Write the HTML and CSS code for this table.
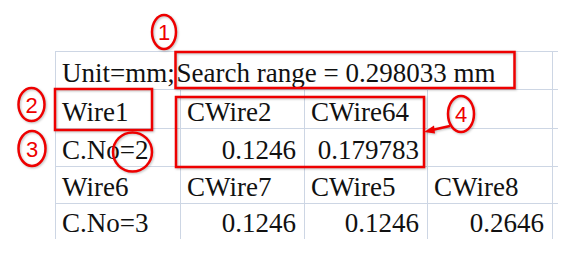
FILE: index.html
```html
<!DOCTYPE html>
<html>
<head>
<meta charset="utf-8">
<link rel="stylesheet" href="styles.css">
</head>
<body>
<div class="page">
  <div class="sheet">
    <div class="cell span4"><span>Unit=mm;</span><span class="tight"> Search range = 0.298033 mm</span></div>
    <div class="cell edge"></div>

    <div class="cell">Wire1</div>
    <div class="cell">CWire2</div>
    <div class="cell">CWire64</div>
    <div class="cell"></div>
    <div class="cell edge"></div>

    <div class="cell">C.No=2</div>
    <div class="cell num">0.1246</div>
    <div class="cell num">0.179783</div>
    <div class="cell"></div>
    <div class="cell edge"></div>

    <div class="cell">Wire6</div>
    <div class="cell">CWire7</div>
    <div class="cell">CWire5</div>
    <div class="cell">CWire8</div>
    <div class="cell edge"></div>

    <div class="cell">C.No=3</div>
    <div class="cell num">0.1246</div>
    <div class="cell num">0.1246</div>
    <div class="cell num">0.2646</div>
    <div class="cell edge"></div>
  </div>

  <svg class="marks" width="584" height="270" viewBox="0 0 584 270">
    <g class="shapes">
      <rect x="175.5" y="52" width="339" height="36" />
      <rect x="55" y="89" width="97" height="41" />
      <rect x="176" y="97" width="248" height="70" />
      <ellipse cx="164" cy="32" rx="12" ry="17" />
      <ellipse cx="31.5" cy="104.5" rx="13" ry="16.5" />
      <ellipse cx="32" cy="148.5" rx="13.5" ry="17.5" />
      <ellipse cx="132.5" cy="152" rx="19.5" ry="19.5" />
      <ellipse cx="461" cy="114" rx="13" ry="18" />
      <line x1="450" y1="126" x2="432" y2="130" />
      <polygon class="head" points="424,132 434,125.5 435,133.5" />
    </g>
    <g class="nums">
      <text x="164" y="40">1</text>
      <text x="31.5" y="112.5">2</text>
      <text x="32" y="156.5">3</text>
      <text x="461" y="122">4</text>
    </g>
  </svg>
</div>
</body>
</html>
```

FILE: styles.css
```css
html, body {
  margin: 0;
  padding: 0;
  background: #ffffff;
}

.page {
  position: relative;
  width: 584px;
  height: 270px;
  box-sizing: border-box;
  padding: 51px 0 0 55px;
  overflow: hidden;
}

.sheet {
  display: grid;
  grid-template-columns: 125px 124px 123px 125px 6px;
  grid-template-rows: 38px 39px 38px 37px 36px;
}

.cell {
  box-sizing: border-box;
  border-top: 1px solid #cdd6e4;
  border-left: 1px solid #cdd6e4;
  display: flex;
  align-items: flex-end;
  padding: 0 8px 0 6px;
  font-family: "Liberation Serif", "Times New Roman", serif;
  font-size: 27px;
  line-height: 31px;
  color: #111111;
  white-space: pre;
  overflow: visible;
}

.span4 {
  grid-column: span 4;
}

.tight {
  margin-left: -5px;
}

.num {
  justify-content: flex-end;
}

.edge {
  padding: 0;
}

.marks {
  position: absolute;
  left: 0;
  top: 0;
  pointer-events: none;
}

.shapes {
  fill: none;
  stroke: #ee0000;
  stroke-width: 2.5;
  filter: drop-shadow(1.5px 1.5px 1px rgba(0, 0, 0, 0.25));
}

.shapes .head {
  fill: #ee0000;
  stroke: none;
}

.nums text {
  font-family: "Liberation Sans", Arial, sans-serif;
  font-size: 22px;
  fill: #ee0000;
  text-anchor: middle;
}
```
